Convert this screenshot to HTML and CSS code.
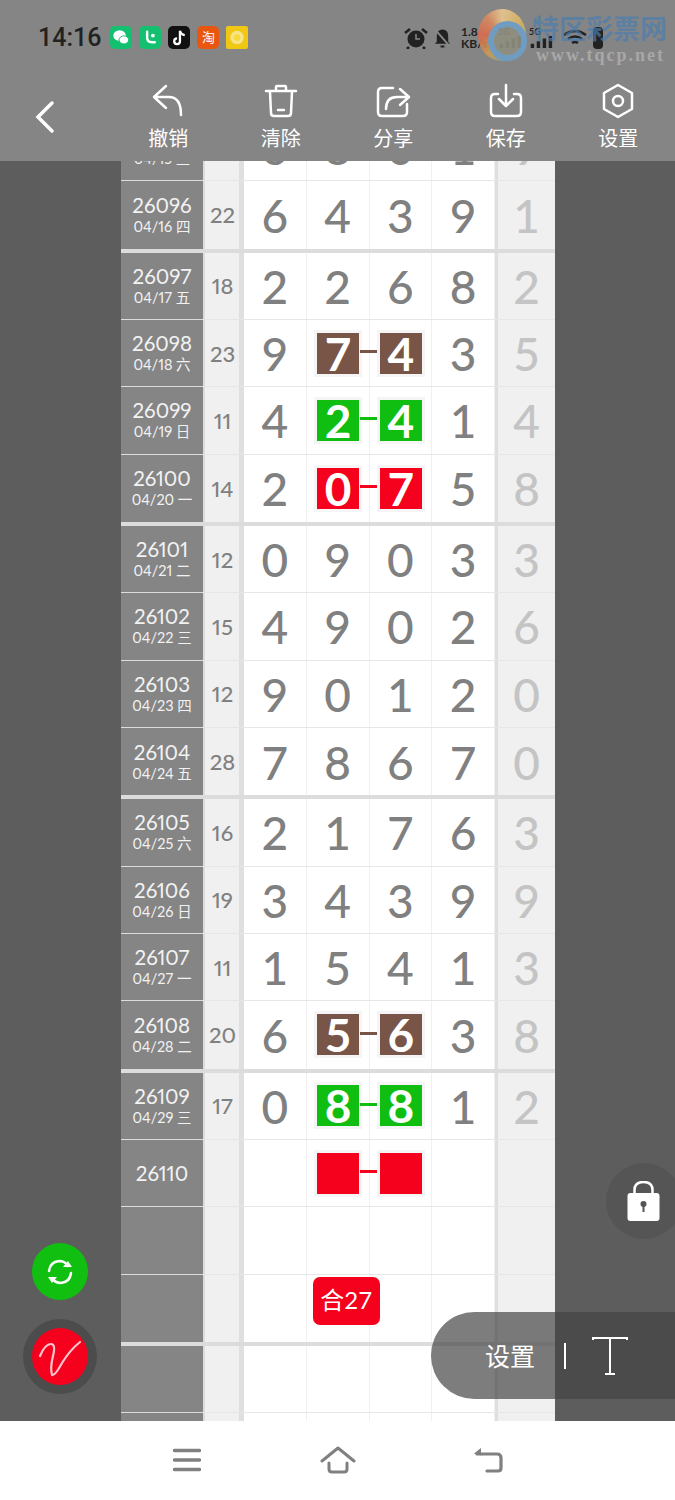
FILE: index.html
```html
<!DOCTYPE html>
<html>
<head>
  <title>排列五 走势</title>
  <link rel="stylesheet" href="styles.css">
</head>
<body>
  <div class="app">
    <div class="header">
      <div class="statusbar">
        <span class="time">14:16</span>
        <span class="app-icon wechat"><svg viewBox="0 0 22 24"><ellipse cx="9.500" cy="10" rx="6.500" ry="5.500" fill="#fff"/><ellipse cx="14" cy="14.500" rx="5" ry="4.200" fill="#fff" stroke="#12c070"/></svg></span>
        <span class="app-icon line"><svg viewBox="0 0 22 24"><path d="M8 6v6q0 5 5 5h3" fill="none" stroke="#fff" stroke-width="2.500" stroke-linecap="round"/><circle cx="14" cy="10" r="2" fill="#fff"/></svg></span>
        <span class="app-icon tiktok"><svg viewBox="0 0 22 24"><path d="M12 5v11a3 3 0 1 1-3-3M12 5q1 4 5 4.500" fill="none" stroke="#fff" stroke-width="2.400"/></svg></span>
        <span class="app-icon taobao">淘</span>
        <span class="app-icon sun"><svg viewBox="0 0 22 24"><circle cx="11" cy="12" r="7" fill="#f8e488"/><circle cx="11" cy="12" r="3.500" fill="#f7d93c"/></svg></span>
        <span class="status-right">
          <svg class="st-alarm" viewBox="0 0 26 22"><circle cx="13" cy="12" r="8.500" fill="#222"/><path d="M13 7v5h4" fill="none" stroke="#888" stroke-width="1.500"/><path d="M2 6l5-4M24 6l-5-4M6 20l-2 2M20 20l2 2" stroke="#222" stroke-width="2.500"/></svg>
          <svg class="st-bell" viewBox="0 0 20 22"><path d="M10 2q6 0 6 7v6l2 2H2l2-2V9q0-7 6-7zM8 19h4v2H8z" fill="#222"/><path d="M2 2l16 18" stroke="#888" stroke-width="2"/></svg>
          <span class="speed">1.8<br>KB/s</span>
          <span class="net net-first"><small>5G</small><svg viewBox="0 0 28 14"><path d="M2 9h4v5H2zM9 6h4v8H9zM16 3h4v11h-4zM23 0h4v14h-4z" fill="#222"/></svg></span>
          <span class="net"><small>5G</small><svg viewBox="0 0 28 14"><path d="M2 9h4v5H2zM9 6h4v8H9zM16 3h4v11h-4zM23 0h4v14h-4z" fill="#222"/></svg></span>
          <svg class="st-wifi" viewBox="0 0 26 20"><path d="M2 7q11-8 22 0M6 11q7-5 14 0M10 15q3-2 6 0" fill="none" stroke="#222" stroke-width="2.500"/></svg>
          <span class="battery"></span>
        </span>
      </div>
      <div class="toolbar">
        <svg class="back" viewBox="0 0 22 34"><path d="M18 3L4 17l14 14" fill="none" stroke="#fff" stroke-width="3.500" stroke-linecap="round"/></svg>
        <div class="tool">
          <svg viewBox="0 0 36 34"><path d="M16 2L4 13l12 11M4 13h15q12 0 12 18" fill="none" stroke="#fff" stroke-width="2.500" stroke-linecap="round" stroke-linejoin="round"/></svg>
          <span>撤销</span>
        </div>
        <div class="tool">
          <svg viewBox="0 0 36 34"><path d="M3 7h30M13 7V3q0-1 1-1h8q1 0 1 1v4M7 8l1 21q0 3 3 3h14q3 0 3-3l1-21M15 26h6" fill="none" stroke="#fff" stroke-width="2.500" stroke-linecap="round"/></svg>
          <span>清除</span>
        </div>
        <div class="tool">
          <svg viewBox="0 0 36 34"><path d="M18 4H7q-4 0-4 4v20q0 4 4 4h21q4 0 4-4V20" fill="none" stroke="#fff" stroke-width="2.500" stroke-linecap="round"/><path d="M11 25q0-12 11-12h11M25 5l9 8-9 8" fill="none" stroke="#fff" stroke-width="2.500" stroke-linecap="round" stroke-linejoin="round"/></svg>
          <span>分享</span>
        </div>
        <div class="tool">
          <svg viewBox="0 0 36 34"><path d="M10 10H7q-4 0-4 4v14q0 4 4 4h22q4 0 4-4V14q0-4-4-4h-3M18 1v21M11 15l7 7 7-7" fill="none" stroke="#fff" stroke-width="2.500" stroke-linecap="round" stroke-linejoin="round"/></svg>
          <span>保存</span>
        </div>
        <div class="tool">
          <svg viewBox="0 0 36 36"><path d="M18 2l14 8v16l-14 8-14-8V10z" fill="none" stroke="#fff" stroke-width="2.500" stroke-linejoin="round"/><circle cx="18" cy="18" r="5" fill="none" stroke="#fff" stroke-width="2.500"/></svg>
          <span>设置</span>
        </div>
      </div>
    </div>

    <div class="main">
      <div class="chart">
        <div class="group">
          <div class="row"><div class="issue"><b>26095</b><span>04/15 三</span></div><div class="sum">15</div><div class="num">6</div><div class="num">8</div><div class="num">0</div><div class="num">1</div><div class="tail">9</div></div>
          <div class="row"><div class="issue"><b>26096</b><span>04/16 四</span></div><div class="sum">22</div><div class="num">6</div><div class="num">4</div><div class="num">3</div><div class="num">9</div><div class="tail">1</div></div>
        </div>
        <div class="group">
          <div class="row"><div class="issue"><b>26097</b><span>04/17 五</span></div><div class="sum">18</div><div class="num">2</div><div class="num">2</div><div class="num">6</div><div class="num">8</div><div class="tail">2</div></div>
          <div class="row"><div class="issue"><b>26098</b><span>04/18 六</span></div><div class="sum">23</div><div class="num">9</div><div class="num pair brown"><i>7</i></div><div class="num brown"><i>4</i></div><div class="num">3</div><div class="tail">5</div></div>
          <div class="row"><div class="issue"><b>26099</b><span>04/19 日</span></div><div class="sum">11</div><div class="num">4</div><div class="num pair green"><i>2</i></div><div class="num green"><i>4</i></div><div class="num">1</div><div class="tail">4</div></div>
          <div class="row"><div class="issue"><b>26100</b><span>04/20 一</span></div><div class="sum">14</div><div class="num">2</div><div class="num pair red"><i>0</i></div><div class="num red"><i>7</i></div><div class="num">5</div><div class="tail">8</div></div>
        </div>
        <div class="group">
          <div class="row"><div class="issue"><b>26101</b><span>04/21 二</span></div><div class="sum">12</div><div class="num">0</div><div class="num">9</div><div class="num">0</div><div class="num">3</div><div class="tail">3</div></div>
          <div class="row"><div class="issue"><b>26102</b><span>04/22 三</span></div><div class="sum">15</div><div class="num">4</div><div class="num">9</div><div class="num">0</div><div class="num">2</div><div class="tail">6</div></div>
          <div class="row"><div class="issue"><b>26103</b><span>04/23 四</span></div><div class="sum">12</div><div class="num">9</div><div class="num">0</div><div class="num">1</div><div class="num">2</div><div class="tail">0</div></div>
          <div class="row"><div class="issue"><b>26104</b><span>04/24 五</span></div><div class="sum">28</div><div class="num">7</div><div class="num">8</div><div class="num">6</div><div class="num">7</div><div class="tail">0</div></div>
        </div>
        <div class="group">
          <div class="row"><div class="issue"><b>26105</b><span>04/25 六</span></div><div class="sum">16</div><div class="num">2</div><div class="num">1</div><div class="num">7</div><div class="num">6</div><div class="tail">3</div></div>
          <div class="row"><div class="issue"><b>26106</b><span>04/26 日</span></div><div class="sum">19</div><div class="num">3</div><div class="num">4</div><div class="num">3</div><div class="num">9</div><div class="tail">9</div></div>
          <div class="row"><div class="issue"><b>26107</b><span>04/27 一</span></div><div class="sum">11</div><div class="num">1</div><div class="num">5</div><div class="num">4</div><div class="num">1</div><div class="tail">3</div></div>
          <div class="row"><div class="issue"><b>26108</b><span>04/28 二</span></div><div class="sum">20</div><div class="num">6</div><div class="num pair brown"><i>5</i></div><div class="num brown"><i>6</i></div><div class="num">3</div><div class="tail">8</div></div>
        </div>
        <div class="group">
          <div class="row"><div class="issue"><b>26109</b><span>04/29 三</span></div><div class="sum">17</div><div class="num">0</div><div class="num pair green"><i>8</i></div><div class="num green"><i>8</i></div><div class="num">1</div><div class="tail">2</div></div>
          <div class="row"><div class="issue"><b>26110</b></div><div class="sum"></div><div class="num"></div><div class="num pair red"><i></i></div><div class="num red"><i></i></div><div class="num"></div><div class="tail"></div></div>
          <div class="row"><div class="issue"></div><div class="sum"></div><div class="num"></div><div class="num"></div><div class="num"></div><div class="num"></div><div class="tail"></div></div>
          <div class="row"><div class="issue"></div><div class="sum"></div><div class="num"></div><div class="num"><span class="he">合27</span></div><div class="num"></div><div class="num"></div><div class="tail"></div></div>
        </div>
        <div class="group">
          <div class="row"><div class="issue"></div><div class="sum"></div><div class="num"></div><div class="num"></div><div class="num"></div><div class="num"></div><div class="tail"></div></div>
          <div class="row"><div class="issue"></div><div class="sum"></div><div class="num"></div><div class="num"></div><div class="num"></div><div class="num"></div><div class="tail"></div></div>
        </div>
      </div>
    </div>

    <div class="navbar">
      <svg class="nav-menu" viewBox="0 0 28 24"><path d="M1.500 2.500h25M1.500 12h25M1.500 21.500h25" stroke="#808080" stroke-width="3.500" stroke-linecap="round"/></svg>
      <svg class="nav-home" viewBox="0 0 36 28"><path d="M2 15L18 2l16 13M9 17v6q0 3 3 3h12q3 0 3-3v-6" fill="none" stroke="#808080" stroke-width="3" stroke-linecap="round" stroke-linejoin="round"/></svg>
      <svg class="nav-back" viewBox="0 0 30 26"><path d="M4 7h20q4 0 4 4v10q0 3-3 3H14" fill="none" stroke="#808080" stroke-width="3.200" stroke-linecap="round"/><path d="M8 1L1 6.500l7 2z" fill="#808080"/></svg>
    </div>

    <div class="watermark">
      <span class="wm-logo"></span>
      <span class="wm-title">特区彩票网</span>
      <span class="wm-url">www.tqcp.net</span>
    </div>

    <div class="fab refresh">
      <svg viewBox="0 0 32 32"><path d="M5 15q1-9 10-10 6 0 9 5M27 17q-1 9-10 10-6 0-9-5" fill="none" stroke="#fff" stroke-width="2.500" stroke-linecap="round"/><path d="M19 11h9l-4-6zM13 21H4l4 6z" fill="#fff"/></svg>
    </div>
    <div class="fab pen">
      <svg viewBox="0 0 56 56"><path d="M8 27q5-12 11-12 5 0 2 12t-1 19q3 1 10-12 8-13 18-21" fill="none" stroke="#ffc4cc" stroke-width="2.200" stroke-linecap="round"/></svg>
    </div>
    <div class="lock">
      <svg viewBox="0 0 32 40"><path d="M7 13V9q0-8 9-8t9 8v4" fill="none" stroke="#fff" stroke-width="2.500"/><rect y="12" width="32" height="28" rx="3" fill="#fff"/><circle cx="16" cy="23" r="3" fill="#555"/><rect x="15" y="24" width="2" height="7" fill="#555"/></svg>
    </div>
    <div class="setting-pill">
      <span class="pill-label">设置</span>
      <span class="pill-line"></span>
      <svg viewBox="0 0 36 38"><path d="M1 3V1h34v2M18 1v36M13 37h10" fill="none" stroke="#fff" stroke-width="2"/></svg>
    </div>
  </div>
</body>
</html>
```

FILE: styles.css
```css
* {
  box-sizing: border-box;
}

body {
  margin: 0;
  font-family: Lato, "Noto Sans CJK SC", sans-serif;
}

.app {
  position: relative;
  width: 675px;
  height: 1500px;
  display: flex;
  flex-direction: column;
  overflow: hidden;
  background: #5d5d5d;
}

/* header */
.header {
  height: 161px;
  flex: none;
  background: #858585;
  position: relative;
  z-index: 2;
}

.statusbar {
  height: 75px;
  padding-left: 38px;
  display: flex;
  align-items: center;
  position: relative;
}

.time {
  font-family: Roboto, sans-serif;
  font-size: 25px;
  font-weight: 500;
  color: #222;
  margin-right: 9px;
}

.app-icon {
  width: 22px;
  height: 23px;
  margin-right: 7px;
  border-radius: 5px;
  display: flex;
  align-items: center;
  justify-content: center;
  color: #fff;
  font-size: 13px;
  line-height: 1;
}

.app-icon svg {
  width: 100%;
  height: 100%;
}

.wechat, .line { background: #12c070; }
.tiktok { background: #111; }
.taobao { background: #e8560f; }
.sun { background: #f0c814; border-radius: 2px; }

.status-right {
  position: absolute;
  left: 403px;
  top: 26px;
  display: flex;
  align-items: center;
  height: 23px;
}

.st-alarm { width: 26px; height: 22px; margin-right: 4px; }
.st-bell { width: 19px; height: 22px; margin-right: 9px; }

.speed {
  width: 37px;
  font-size: 12px;
  font-weight: 700;
  line-height: 12px;
  color: #222;
}

.net {
  width: 24px;
  display: flex;
  flex-direction: column;
  color: #222;
  margin-right: 9px;
}

.net small {
  font-size: 9px;
  font-weight: 700;
  line-height: 9px;
}

.net svg {
  width: 24px;
  height: 12px;
}

.net-first {
  margin-right: 7px;
}

.st-wifi { width: 26px; height: 20px; margin-right: 5px; }

.battery {
  width: 10px;
  height: 22px;
  background: #222;
  border-radius: 4px;
}

.toolbar {
  height: 86px;
  padding-left: 112px;
  display: flex;
  position: relative;
}

.back {
  position: absolute;
  left: 34px;
  top: 25px;
  width: 22px;
  height: 34px;
}

.tool {
  width: 112.500px;
  display: flex;
  flex-direction: column;
  align-items: center;
  color: #fff;
  font-size: 20px;
  line-height: 28px;
}

.tool svg {
  width: 36px;
  height: 36px;
  margin-top: 8px;
  margin-bottom: 5px;
}

/* chart */
.main {
  flex: 1;
  min-height: 0;
  overflow: hidden;
  padding: 0 120px 0 121px;
}

.chart {
  margin-top: -47px;
  background: #fff;
}

.group {
  border-bottom: 4px solid #dcdcdc;
}

.row {
  height: 67.330px;
  display: flex;
  border-bottom: 1px solid #e6e6e6;
}

.row:last-child {
  border-bottom: none;
}

.issue {
  width: 82px;
  margin-bottom: -1px;
  background: #858585;
  border-bottom: 1px solid #dcdcdc;
  color: #f2f2f2;
  display: flex;
  flex-direction: column;
  align-items: center;
  justify-content: center;
  font-variant-numeric: proportional-nums;
}

.issue b {
  font-weight: 400;
  font-size: 20.500px;
  line-height: 24px;
  margin-top: -1px;
}

.issue span {
  font-size: 14.500px;
  line-height: 18px;
  margin-top: 1px;
}

.sum {
  width: 41px;
  background: #f0f0f0;
  border-left: 2px solid #dcdcdc;
  border-right: 5px solid #dfdfdf;
  color: #808080;
  font-size: 22px;
  font-weight: 500;
  padding-left: 1px;
  font-variant-numeric: proportional-nums;
  display: flex;
  align-items: center;
  justify-content: center;
}

.num {
  width: 62.750px;
  position: relative;
  border-right: 1px solid #f0f0f0;
  color: #808080;
  font-size: 46px;
  font-weight: 500;
  padding-top: 1px;
  display: flex;
  align-items: center;
  justify-content: center;
}

.num i {
  width: 42px;
  height: 41px;
  font-style: normal;
  color: #fff;
  font-size: 46px;
  font-weight: 700;
  line-height: 41px;
  text-align: center;
  box-shadow: 0 0 0 3px #f5f5f5;
  margin-top: -1px;
  margin-left: 1px;
}

.num.brown i { background: #795548; }
.num.green i { background: #0fbe10; }
.num.red i { background: #f5001d; }

/* the dash joining a highlighted pair */
.pair::after {
  content: "";
  position: absolute;
  right: -9px;
  top: 50%;
  width: 18px;
  height: 3px;
  margin-top: -3px;
}

.pair.brown::after { background: #795548; }
.pair.green::after { background: #0fbe10; }
.pair.red::after { background: #f5001d; }

.he {
  position: absolute;
  left: 6px;
  top: 2px;
  width: 67px;
  height: 48px;
  background: #f5001d;
  border-radius: 7px;
  color: #fff;
  font-size: 24px;
  font-weight: 400;
  line-height: 46px;
  text-align: center;
  z-index: 1;
}

.tail {
  flex: 1;
  background: #f0f0f0;
  border-left: 3px solid #dfdfdf;
  color: #c4c4c4;
  font-size: 46px;
  font-weight: 500;
  padding-top: 1px;
  display: flex;
  align-items: center;
  justify-content: center;
}

/* bottom nav */
.navbar {
  height: 79px;
  flex: none;
  background: #fff;
  position: relative;
  z-index: 2;
  display: flex;
  align-items: center;
  justify-content: center;
  padding-bottom: 2px;
}

.nav-menu { width: 28px; height: 24px; margin-right: 119px; }
.nav-home { width: 36px; height: 28px; margin-right: 117px; }
.nav-back { width: 30px; height: 26px; }

/* watermark */
.watermark {
  position: absolute;
  left: 478px;
  top: 9px;
  width: 190px;
  height: 56px;
  z-index: 3;
}

.wm-logo {
  position: absolute;
  left: 0;
  top: 0;
  width: 48px;
  height: 52px;
  border-radius: 50%;
  background: conic-gradient(#e8c890, #d8b060 60deg, #7fb0a0 120deg, #6f9fc0 170deg, #c8a050 210deg, #d9694f 270deg, #d88a60 320deg, #e8c890);
  opacity: 0.9;
}

.wm-logo::after {
  content: "";
  position: absolute;
  left: 10px;
  top: 12px;
  width: 27px;
  height: 28px;
  border-radius: 50%;
  border: 6px solid #6f9fc8;
  background: #8f8f80;
}

.wm-title {
  position: absolute;
  left: 54px;
  top: 4px;
  font-size: 27px;
  font-weight: 700;
  line-height: 32px;
  white-space: nowrap;
  color: rgba(75, 125, 175, 0.7);
}

.wm-url {
  position: absolute;
  left: 58px;
  top: 36px;
  font-family: "Liberation Serif", serif;
  font-size: 18px;
  font-weight: 700;
  line-height: 20px;
  letter-spacing: 2px;
  white-space: nowrap;
  color: #a8a8a8;
}

/* floating controls */
.fab {
  position: absolute;
  left: 32px;
  width: 56px;
  height: 57px;
  border-radius: 50%;
  z-index: 3;
  display: flex;
  align-items: center;
  justify-content: center;
}

.refresh {
  top: 1243px;
  background: #10bf10;
}

.refresh svg {
  width: 32px;
  height: 32px;
}

.pen {
  top: 1328px;
  background: #f5001d;
  box-shadow: 0 0 0 9px #4c4c4c;
}

.pen svg {
  width: 56px;
  height: 56px;
}

.lock {
  position: absolute;
  left: 606px;
  top: 1163px;
  width: 76px;
  height: 76px;
  border-radius: 50%;
  background: #555;
  z-index: 3;
  display: flex;
  align-items: center;
  padding-left: 21px;
}

.lock svg {
  width: 33px;
  height: 40px;
}

.setting-pill {
  position: absolute;
  left: 431px;
  top: 1312px;
  width: 244px;
  height: 87px;
  padding-left: 54px;
  border-radius: 44px 0 0 44px;
  background: rgba(67, 67, 67, 0.69);
  z-index: 3;
  display: flex;
  align-items: center;
  color: #fff;
}

.pill-label {
  font-size: 25px;
  line-height: 30px;
  margin-right: 29px;
}

.pill-line {
  width: 2px;
  height: 26px;
  background: #fff;
  margin-right: 26px;
}

.setting-pill svg {
  width: 36px;
  height: 38px;
}
```
